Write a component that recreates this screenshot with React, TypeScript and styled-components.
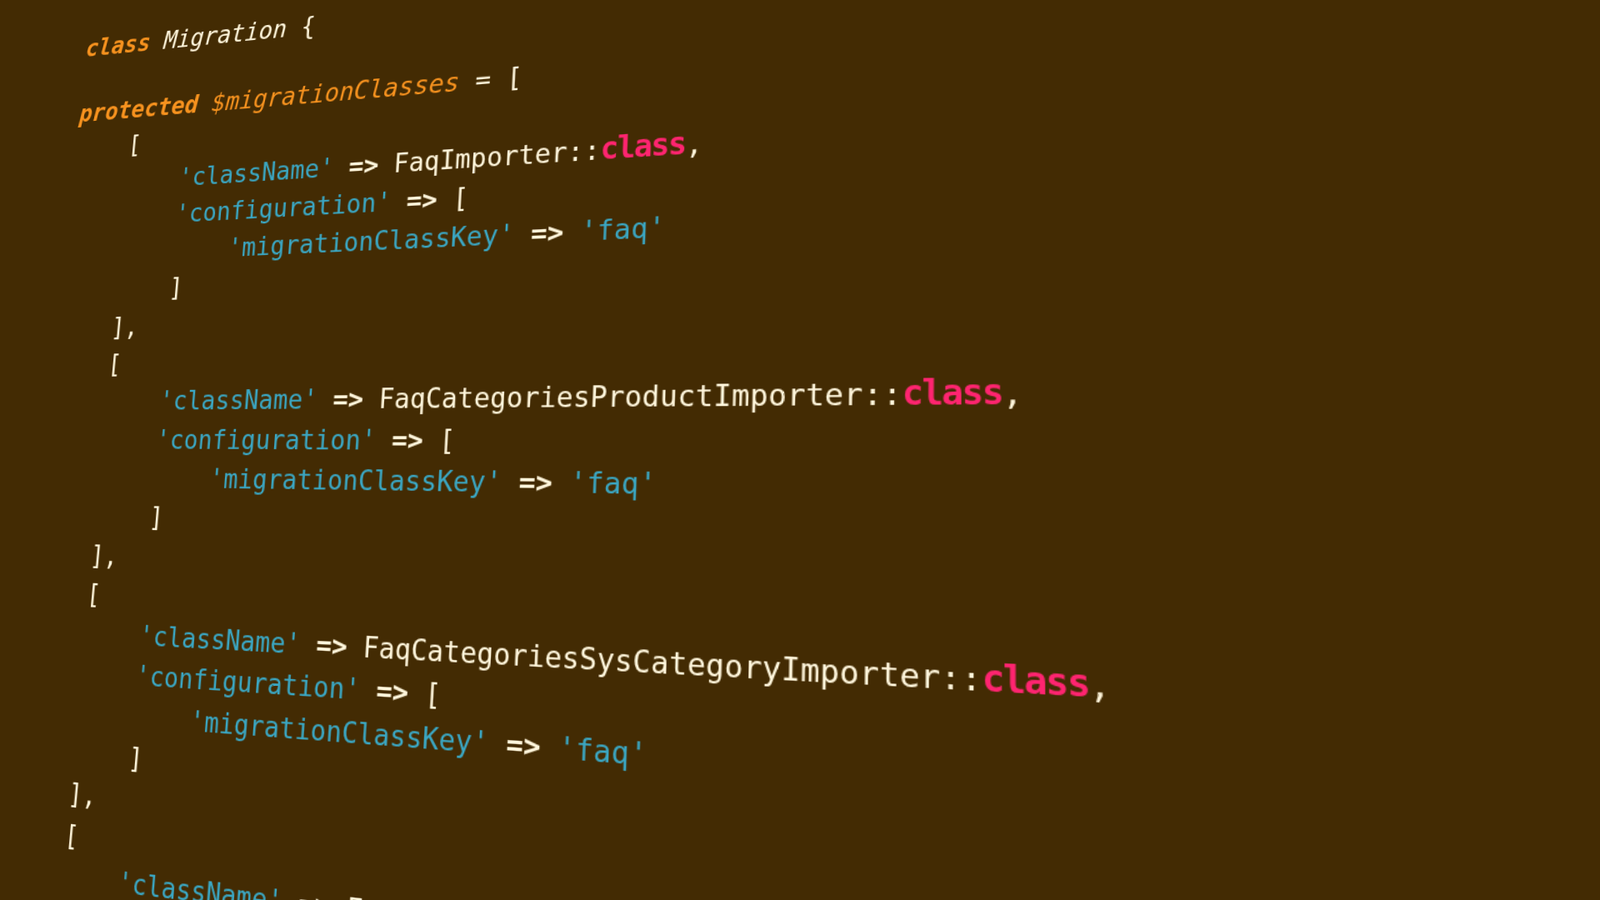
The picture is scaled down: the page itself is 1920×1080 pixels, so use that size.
import React from "react";
import styled, { createGlobalStyle } from "styled-components";

const CELL = 16.27;
const FONT = 27;
const LINE = 39.3;

const Global = createGlobalStyle`
  html, body {
    margin: 0;
    padding: 0;
    width: 100%;
    height: 100%;
    overflow: hidden;
    background: #432b03;
  }
  #root { height: 100%; }
`;

const Page = styled.main`
  width: 1920px;
  height: 1080px;
  overflow: hidden;
  background: #432b03;
  padding-left: 58px;
  box-sizing: border-box;
`;

const CodeBlock = styled.div`
  width: 1500px;
  padding-top: 78.65px;
  font-family: "DejaVu Sans Mono", "Liberation Mono", monospace;
  font-size: ${FONT}px;
  letter-spacing: ${CELL - FONT * 0.602}px;
  line-height: ${LINE}px;
  color: #fff6dc;
  white-space: pre;
  transform-origin: 0 521.8px;
  transform: perspective(1170px) rotateY(-14.5deg) rotateX(7deg) skewX(-3.92deg)
    scaleY(1.15);
`;

const Line = styled.div<{ $indent: number; $gapAfter?: number }>`
  height: ${LINE}px;
  padding-left: ${(p) => p.$indent * CELL}px;
  margin-bottom: ${(p) => p.$gapAfter ?? 0}px;
`;

const Keyword = styled.span`
  color: #f7921e;
  font-style: italic;
  font-weight: bold;
`;

const Variable = styled.span`
  color: #f7921e;
  font-style: italic;
`;

const Name = styled.span<{ $italic?: boolean }>`
  color: #fff6dc;
  font-style: ${(p) => (p.$italic ? "italic" : "normal")};
`;

const Str = styled.span`
  color: #3aa6c2;
`;

const Arrow = styled.span`
  color: #fff6dc;
  font-weight: bold;
`;

const ClassKw = styled.span`
  color: #ff2470;
  font-weight: bold;
  font-size: 29.5px;
  letter-spacing: -1.5px;
`;

const entries = [
  "FaqImporter",
  "FaqCategoriesProductImporter",
  "FaqCategoriesSysCategoryImporter",
];

function EntryLines({ name, last }: { name: string; last?: boolean }) {
  return (
    <>
      <Line $indent={4}>[</Line>
      <Line $indent={8}>
        <Str>'className'</Str> <Arrow>=&gt;</Arrow> <Name>{name}::</Name>
        <ClassKw>class</ClassKw>,
      </Line>
      {!last && (
        <>
          <Line $indent={8}>
            <Str>'configuration'</Str> <Arrow>=&gt;</Arrow> [
          </Line>
          <Line $indent={12}>
            <Str>'migrationClassKey'</Str> <Arrow>=&gt;</Arrow> <Str>'faq'</Str>
          </Line>
          <Line $indent={8}>]</Line>
          <Line $indent={4}>],</Line>
        </>
      )}
    </>
  );
}

export default function App() {
  return (
    <>
      <Global />
      <Page>
        <CodeBlock>
          <Line $indent={0} $gapAfter={35}>
            <Keyword>class</Keyword> <Name $italic>Migration</Name> {"{"}
          </Line>
          <Line $indent={0}>
            <Keyword>protected</Keyword> <Variable>$migrationClasses</Variable> = [
          </Line>
          {entries.map((name) => (
            <EntryLines key={name} name={name} />
          ))}
          <EntryLines name="FaqCategoriesImporter" last />
        </CodeBlock>
      </Page>
    </>
  );
}
